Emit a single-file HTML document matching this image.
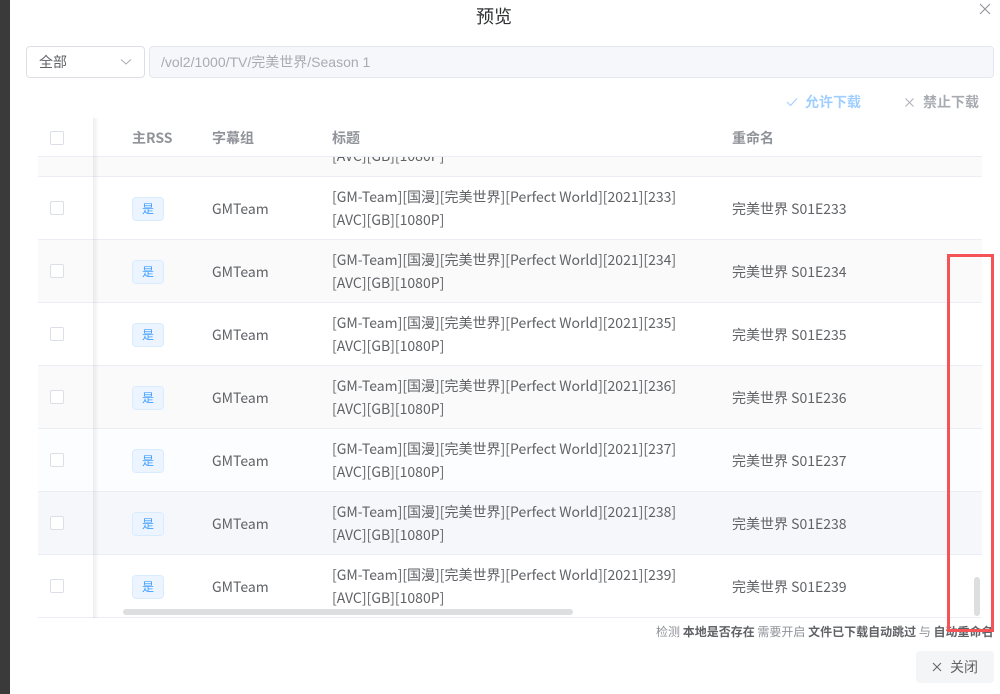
<!DOCTYPE html>
<html><head><meta charset="utf-8"><style>
*{box-sizing:border-box;margin:0;padding:0}
body{width:1000px;height:694px;overflow:hidden;background:#fff;font-family:"Noto Sans CJK SC","Liberation Sans",sans-serif;font-size:14px;color:#606266;position:relative}
.a{position:absolute}
.strip{left:0;top:0;width:10px;height:694px;background:#3a3a3a}
.title{left:0;width:988px;top:4px;text-align:center;font-size:18px;color:#303133;line-height:24px}
.sel{left:26px;top:46px;width:119px;height:32px;border:1px solid #dcdfe6;border-radius:4px;padding-left:12px;line-height:30px;color:#606266}
.path{left:149px;top:46px;width:845px;height:32px;border:1px solid #e4e7ed;border-radius:4px;background:#f5f7fa;padding-left:11px;line-height:30px;color:#a8abb2;font-family:"Liberation Sans","Noto Sans CJK SC",sans-serif}
.row{left:38px;width:944px;height:63px;border-bottom:1px solid #ebeef5}
.cb{width:14px;height:14px;border:1px solid #dcdfe6;border-radius:2px;background:#fff}
.tag{width:32px;height:24px;border:1px solid #d9ecff;background:#ecf5ff;color:#409eff;border-radius:4px;font-size:12px;text-align:center;line-height:22px}
.t{line-height:23px}
.hd{font-weight:bold;color:#909399}
</style></head><body>
<div class="a strip"></div>
<div class="a title">预览</div>
<svg class="a" style="left:979px;top:3px" width="12" height="12" viewBox="0 0 12 12"><path d="M1 1L11 11M11 1L1 11" stroke="#909399" stroke-width="1.1"/></svg>
<div class="a sel">全部</div>
<svg class="a" style="left:120px;top:58px" width="12" height="8" viewBox="0 0 12 8"><path d="M1 1.5L6 6L11 1.5" stroke="#a8abb2" fill="none" stroke-width="1"/></svg>
<div class="a path">/vol2/1000/TV/完美世界/Season 1</div>
<svg class="a" style="left:786px;top:97px" width="12" height="10" viewBox="0 0 12 10"><path d="M1 5L4.5 8.5L11 1.5" stroke="#a0cfff" fill="none" stroke-width="1.1"/></svg>
<div class="a" style="left:805px;top:92px;font-weight:bold;color:#a0cfff;line-height:20px">允许下载</div>
<svg class="a" style="left:905px;top:98px" width="9" height="9" viewBox="0 0 9 9"><path d="M0.5 0.5L8.5 8.5M8.5 0.5L0.5 8.5" stroke="#b1b3b8" stroke-width="1.1"/></svg>
<div class="a" style="left:923px;top:92px;font-weight:bold;color:#a8abb2;line-height:20px">禁止下载</div>

<div class="a" style="left:38px;top:118px;width:944px;height:39px;border-bottom:1px solid #ebeef5"></div>
<div class="a cb" style="left:50px;top:131px"></div>
<div class="a hd" style="left:132px;top:128px">主RSS</div>
<div class="a hd" style="left:212px;top:128px">字幕组</div>
<div class="a hd" style="left:332px;top:128px">标题</div>
<div class="a hd" style="left:732px;top:128px">重命名</div>
<div class="a" style="left:38px;top:157px;width:944px;height:20px;background:#fafafa;border-bottom:1px solid #ebeef5;overflow:hidden"><div style="position:absolute;left:294px;top:-12px" class="t">[AVC][GB][1080P]</div></div>

<div class="a row" style="top:177px;background:#fff"></div>
<div class="a row" style="top:240px;background:#fafafa"></div>
<div class="a row" style="top:303px;background:#fff"></div>
<div class="a row" style="top:366px;background:#fafafa"></div>
<div class="a row" style="top:429px;background:#fcfdff"></div>
<div class="a row" style="top:492px;background:#f5f7fa"></div>
<div class="a row" style="top:555px;background:#fff"></div>

<div class="a" style="left:93px;top:118px;width:6px;height:500px;background:linear-gradient(to right,rgba(0,0,0,0.07),rgba(0,0,0,0))"></div>

<div id="r"></div>
<div class="a" style="left:123px;top:609px;width:450px;height:6px;border-radius:3px;background:#dddee0"></div>
<div class="a" style="left:974px;top:577px;width:6px;height:39px;border-radius:3px;background:#dddee0"></div>

<div class="a" style="left:656px;top:623px;font-size:12px;color:#909399;line-height:18px;white-space:nowrap">检测 <b style="color:#606266">本地是否存在</b> 需要开启 <b style="color:#606266">文件已下载自动跳过</b> 与 <b style="color:#606266">自动重命名</b></div>
<div class="a" style="left:947px;top:254px;width:47px;height:378px;border:3px solid #f55356"></div>
<div class="a" style="left:916px;top:651px;width:78px;height:32px;background:#f4f5f7;border-radius:4px"></div>
<svg class="a" style="left:932px;top:662px" width="10" height="10" viewBox="0 0 10 10"><path d="M1 1L9 9M9 1L1 9" stroke="#606266" stroke-width="1"/></svg>
<div class="a" style="left:950px;top:656px;line-height:22px;color:#606266">关闭</div>

<script>
var h='';var n=[233,234,235,236,237,238,239];
for(var i=0;i<7;i++){var y=177+i*63;
h+='<div class="a cb" style="left:50px;top:'+(y+24)+'px"></div>'+
'<div class="a tag" style="left:132px;top:'+(y+20)+'px">是</div>'+
'<div class="a" style="left:212px;top:'+(y+21)+'px;line-height:22px">GMTeam</div>'+
'<div class="a t" style="left:332px;top:'+(y+9)+'px;white-space:nowrap">[GM-Team][国漫][完美世界][Perfect World][2021]['+n[i]+']<br>[AVC][GB][1080P]</div>'+
'<div class="a" style="left:732px;top:'+(y+21)+'px;line-height:22px">完美世界 S01E'+n[i]+'</div>';}
document.getElementById('r').innerHTML=h;
</script>
</body></html>
